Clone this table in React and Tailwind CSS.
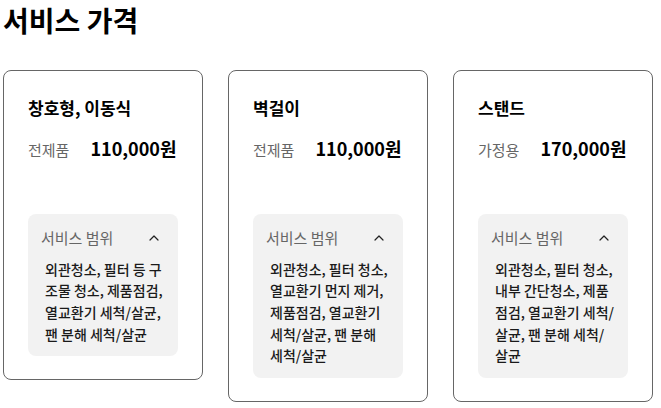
import { ChevronUp } from "lucide-react";

const plans = [
  {
    name: "창호형, 이동식",
    label: "전제품",
    price: "110,000원",
    scope: "외관청소, 필터 등 구조물 청소, 제품점검, 열교환기 세척/살균, 팬 분해 세척/살균",
  },
  {
    name: "벽걸이",
    label: "전제품",
    price: "110,000원",
    scope: "외관청소, 필터 청소, 열교환기 먼지 제거, 제품점검, 열교환기 세척/살균, 팬 분해 세척/살균",
  },
  {
    name: "스탠드",
    label: "가정용",
    price: "170,000원",
    scope: "외관청소, 필터 청소, 내부 간단청소, 제품점검, 열교환기 세척/살균, 팬 분해 세척/살균",
  },
];

export default function App() {
  return (
    <div
      className="min-h-screen bg-white pl-[3px] pt-[2px] text-black"
      style={{ fontFamily: '"Noto Sans CJK KR", "Noto Sans", sans-serif' }}
    >
      <h1 className="text-[28px] font-bold leading-[36px]">서비스 가격</h1>

      <div className="mt-[32px] flex items-start gap-[25px]">
        {plans.map((plan, i) => (
          <div
            key={i}
            className="w-[200px] rounded-lg border border-[#666] px-6 pt-[24px] pb-[23px]"
          >
            <h3 className="text-[17px] font-bold leading-[26px]">{plan.name}</h3>
            <div className="mt-[14px] flex items-baseline gap-[21px]">
              <span className="text-[15px] text-[#666]">{plan.label}</span>
              <span className="text-[18px] font-bold">{plan.price}</span>
            </div>

            <div className="mt-[52px] rounded-lg bg-[#f2f2f2] pb-[11px]">
              <div className="flex items-center justify-between pl-[13px] pr-[16px] pt-[13px]">
                <span className="text-[15px] text-[#666]">서비스 범위</span>
                <ChevronUp className="h-4 w-4 text-[#222]" strokeWidth={1.8} />
              </div>
              <p className="mt-[9px] pl-[17px] pr-[14px] text-[14px] font-medium leading-[21.7px] text-[#1a1a1a]">
                {plan.scope}
              </p>
            </div>
          </div>
        ))}
      </div>
    </div>
  );
}
